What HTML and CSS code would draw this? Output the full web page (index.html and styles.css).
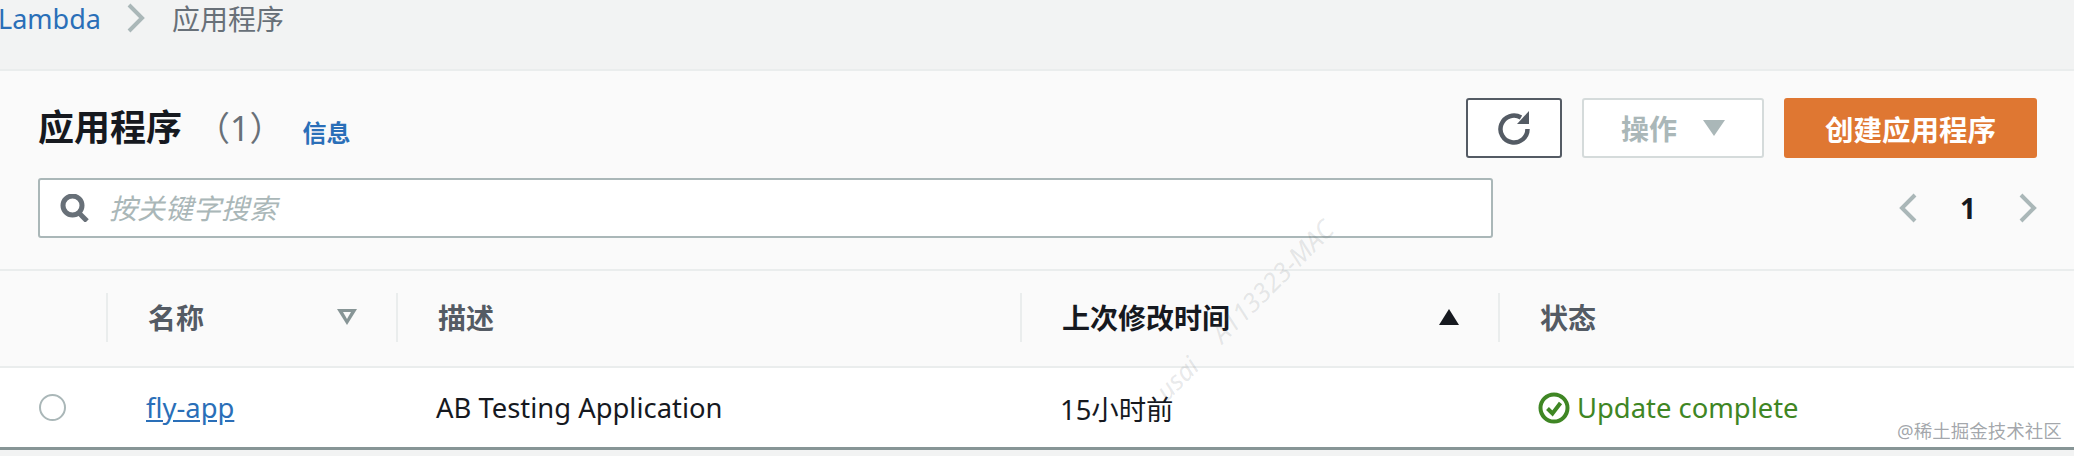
FILE: index.html
```html
<!DOCTYPE html>
<html lang="zh-CN">
<head>
  <meta charset="UTF-8" />
  <meta name="viewport" content="width=device-width, initial-scale=1.0"/>
  <title>Lambda 应用程序</title>
  <link rel="stylesheet" href="styles.css">
</head>
<body>
  <nav class="crumbs">
    <a href="#" class="crumb-link">Lambda</a>
    <svg class="crumb-sep" viewBox="0 0 18 30"><path d="M2 2 L15 15 L2 28" /></svg>
    <span class="crumb-current">应用程序</span>
  </nav>

  <section class="panel">
    <div class="panel-head">
      <div class="head-top">
        <h1>应用程序</h1>
        <span class="count">（1）</span>
        <a href="#" class="info">信息</a>
        <div class="actions">
          <button class="btn btn-refresh" aria-label="刷新">
            <svg viewBox="0 0 34 34"><path class="refresh-arc" d="M24 6.5 A13.5 13.5 0 1 0 30.5 18" /><path class="refresh-tip" d="M20 13 H32 V0 Z" /></svg>
          </button>
          <button class="btn btn-disabled">操作<span class="caret"></span></button>
          <button class="btn btn-primary">创建应用程序</button>
        </div>
      </div>
      <div class="head-bottom">
        <label class="search">
          <svg class="search-icon" viewBox="0 0 30 28"><circle cx="12.5" cy="11.5" r="9.5" /><path d="M19 19 L27 27" /></svg>
          <input type="text" placeholder="按关键字搜索">
        </label>
        <div class="pager">
          <svg viewBox="0 0 18 30"><path d="M16 2 L3 15 L16 28" /></svg>
          <span class="page-num">1</span>
          <svg viewBox="0 0 18 30"><path d="M2 2 L15 15 L2 28" /></svg>
        </div>
      </div>
    </div>

    <div class="table-row table-header">
      <div class="cell cell-select"></div>
      <div class="cell"><span>名称</span><span class="sort sort-idle"></span></div>
      <div class="cell"><span>描述</span></div>
      <div class="cell cell-active"><span>上次修改时间</span><span class="sort sort-asc"></span></div>
      <div class="cell"><span>状态</span></div>
    </div>
    <div class="table-row table-body">
      <div class="cell cell-select"><span class="radio"></span></div>
      <div class="cell"><a href="#" class="app-link">fly-app</a></div>
      <div class="cell">AB Testing Application</div>
      <div class="cell">15小时前</div>
      <div class="cell status">
        <svg viewBox="0 0 32 32"><circle cx="16" cy="16" r="13.5" /><path d="M9.5 16.5 L14.5 21.5 L22.5 11" /></svg>
        <span>Update complete</span>
      </div>
    </div>
  </section>

  <span class="stamp stamp-a">A113323-MAC</span>
  <span class="stamp stamp-b">usai</span>
  <span class="credit">@稀土掘金技术社区</span>
</body>
</html>
```

FILE: styles.css
```css
:root {
  --page: #f2f3f3;
  --panel: #fafafa;
  --line: #eaeded;
  --blue: #2a6fb8;
  --grey: #545b64;
  --muted: #aab7b8;
  --ink: #16191f;
  --orange: #df7732;
  --green: #3f8624;
}

* {
  box-sizing: border-box;
  margin: 0;
  padding: 0;
}

html, body {
  width: 2074px;
  height: 456px;
  overflow: hidden;
}

body {
  position: relative;
  background: var(--page);
  color: var(--ink);
  font-family: "Noto Sans", "Noto Sans CJK SC", sans-serif;
  font-size: 28px;
}

a {
  color: var(--blue);
}

svg {
  display: block;
  fill: none;
}

.crumbs {
  display: flex;
  align-items: center;
  height: 69px;
  padding-bottom: 33px;
}

.crumb-link {
  margin-left: -2px;
  text-decoration: none;
  font-size: 27px;
}

.crumb-sep {
  width: 18px;
  height: 30px;
  margin: 0 27px 0 26px;
  stroke: var(--muted);
  stroke-width: 4;
}

.crumb-current {
  color: #687078;
  font-size: 28px;
}

.panel {
  background: var(--panel);
  border-top: 2px solid var(--line);
}

.panel-head {
  height: 198px;
  padding: 27px 37px 0 38px;
}

.head-top {
  display: flex;
  align-items: center;
  height: 60px;
}

h1 {
  font-size: 36px;
  font-weight: 700;
  line-height: 1;
}

.count {
  margin-left: 14px;
  color: #687078;
  font-size: 34px;
  line-height: 1;
}

.info {
  margin-left: 19px;
  padding-top: 6px;
  font-size: 24px;
  font-weight: 700;
  text-decoration: none;
}

.actions {
  display: flex;
  gap: 20px;
  margin-left: auto;
}

.btn {
  display: flex;
  align-items: center;
  justify-content: center;
  height: 60px;
  border-radius: 3px;
  background: #fff;
  font-family: inherit;
  font-size: 28px;
  font-weight: 700;
}

.btn-refresh {
  width: 96px;
  border: 2px solid var(--grey);
}

.btn-refresh svg {
  width: 34px;
  height: 34px;
}

.refresh-arc {
  stroke: var(--grey);
  stroke-width: 4.5;
}

.refresh-tip {
  fill: var(--grey);
}

.btn-disabled {
  width: 182px;
  border: 2px solid #d5dbdb;
  color: var(--muted);
}

.caret {
  margin-left: 26px;
  border-left: 11px solid transparent;
  border-right: 11px solid transparent;
  border-top: 16px solid var(--muted);
}

.btn-primary {
  width: 253px;
  border: 0;
  background: var(--orange);
  color: #fff;
  font-size: 28.5px;
}

.head-bottom {
  display: flex;
  align-items: center;
  justify-content: space-between;
  margin-top: 20px;
}

.search {
  display: flex;
  align-items: center;
  width: 1455px;
  height: 60px;
  padding-left: 20px;
  border: 2px solid var(--muted);
  border-radius: 3px;
  background: #fff;
}

.search-icon {
  width: 30px;
  height: 28px;
  stroke: #687078;
  stroke-width: 5;
}

.search input {
  flex: 1;
  margin-left: 19px;
  border: 0;
  outline: 0;
  background: transparent;
  font-family: inherit;
  font-size: 28px;
  font-style: italic;
}

.search input::placeholder {
  color: var(--muted);
  opacity: 1;
}

.pager {
  display: flex;
  align-items: center;
  gap: 43px;
}

.pager svg {
  width: 18px;
  height: 30px;
  stroke: var(--muted);
  stroke-width: 4;
}

.page-num {
  font-size: 28px;
  font-weight: 700;
}

.table-row {
  display: grid;
  grid-template-columns: 106px 290px 624px 478px 1fr;
  align-items: center;
}

.table-header {
  height: 99px;
  border-top: 2px solid var(--line);
  border-bottom: 2px solid var(--line);
  color: var(--grey);
  font-weight: 700;
}

.table-header .cell {
  display: flex;
  align-items: center;
  justify-content: space-between;
  height: 49px;
  margin-top: -3px;
  padding: 0 39px 0 40px;
  border-left: 2px solid var(--line);
}

.table-header .cell-select {
  border-left: 0;
}

.table-header .cell-active {
  color: var(--ink);
}

.sort {
  flex: none;
  width: 0;
  height: 0;
  border-left: 10px solid transparent;
  border-right: 10px solid transparent;
}

.sort-idle {
  position: relative;
  border-top: 16px solid #879596;
}

.sort-idle::after {
  content: "";
  position: absolute;
  left: -4px;
  top: -13px;
  border-left: 4px solid transparent;
  border-right: 4px solid transparent;
  border-top: 7px solid var(--panel);
}

.sort-asc {
  border-bottom: 16px solid var(--ink);
}

.table-body {
  height: 82px;
  background: #fff;
  border-bottom: 3px solid #879596;
  font-size: 27.4px;
}

.table-body .cell {
  padding-left: 40px;
}

.table-body .cell-select {
  padding-left: 39px;
}

.radio {
  display: block;
  width: 27px;
  height: 27px;
  border: 2px solid var(--muted);
  border-radius: 50%;
  background: #fff;
}

.status {
  display: flex;
  align-items: center;
  gap: 7px;
  color: var(--green);
}

.status svg {
  flex: none;
  width: 32px;
  height: 32px;
  stroke: var(--green);
  stroke-width: 4;
}

.stamp {
  position: absolute;
  color: rgba(84, 91, 100, 0.14);
  font-size: 26px;
  font-style: italic;
  line-height: 1;
  transform: rotate(-45deg);
  white-space: nowrap;
}

.stamp-a {
  left: 1192px;
  top: 268px;
}

.stamp-b {
  left: 1153px;
  top: 365px;
}

.credit {
  position: absolute;
  left: 1897px;
  top: 422px;
  color: rgba(84, 91, 100, 0.55);
  font-size: 18.5px;
  line-height: 1;
  white-space: nowrap;
}
```
